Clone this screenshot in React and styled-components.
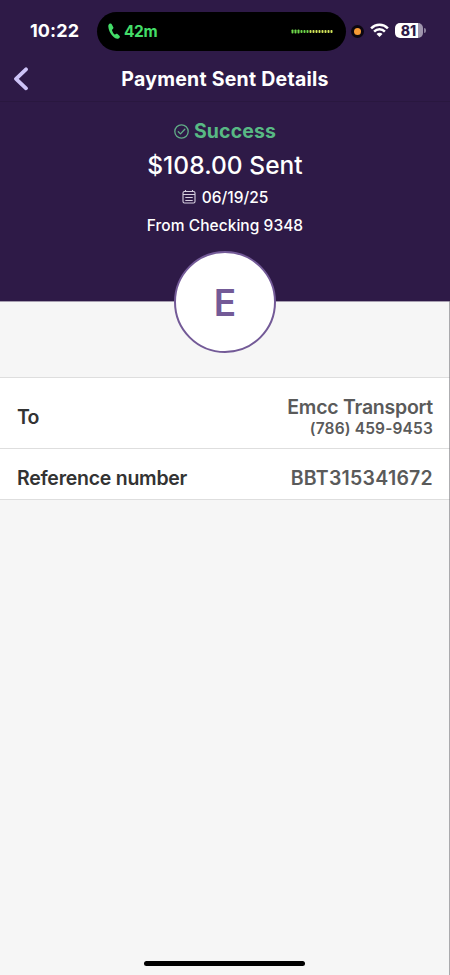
import React from 'react';
import styled, { createGlobalStyle } from 'styled-components';

const GlobalStyle = createGlobalStyle`
  * { box-sizing: border-box; }
  body { margin: 0; background: #f6f6f6; }
`;

const Screen = styled.main`
  display: flex;
  flex-direction: column;
  width: 450px;
  height: 975px;
  background: #f6f6f6;
  font-family: Inter, 'Liberation Sans', sans-serif;
  overflow: hidden;
  position: relative;
  &::after {
    content: '';
    position: absolute;
    right: 0;
    top: 301px;
    bottom: 0;
    width: 1px;
    background: rgba(120, 120, 125, 0.6);
  }
`;

const Header = styled.header`
  display: flex;
  flex-direction: column;
  height: 301px;
  flex: none;
  background: #2e1a47;
  box-shadow: 0 1px 0 #a69eb0;
  color: #fff;
`;

const StatusBar = styled.div`
  display: flex;
  align-items: center;
  height: 50px;
  margin-top: 6px;
`;

const Clock = styled.time`
  width: 67px;
  margin: -1px 0 0 30px;
  font-size: 18px;
  font-weight: 700;
  letter-spacing: 0.1px;
`;

const Island = styled.div`
  display: flex;
  align-items: center;
  justify-content: space-between;
  width: 249px;
  height: 39px;
  padding: 0 13px 0 11px;
  border-radius: 20px;
  background: #000;
`;

const Call = styled.span`
  display: flex;
  align-items: center;
  gap: 4px;
  color: #43dc68;
  font-size: 15.5px;
  font-weight: 700;
  letter-spacing: -0.4px;
`;

const MicDot = styled.span`
  display: flex;
  align-items: center;
  justify-content: center;
  width: 13px;
  height: 13px;
  margin-left: 5px;
  border-radius: 50%;
  background: #0c0710;
  &::before {
    content: '';
    width: 7px;
    height: 7px;
    border-radius: 50%;
    background: #f69a35;
  }
`;

const WifiIcon = styled.svg`
  margin: -2px 0 0 6px;
`;

const Battery = styled.span`
  display: flex;
  align-items: center;
  justify-content: center;
  width: 28px;
  height: 15px;
  margin: -1px 0 0 6px;
  padding-right: 1px;
  border-radius: 5px;
  background: linear-gradient(to right, #fff 0 23px, #9f95ad 23px);
  color: #2e1a47;
  font-size: 14px;
  font-weight: 800;
`;

const BatteryTip = styled.span`
  width: 2px;
  height: 5px;
  margin: -1px 0 0 1px;
  border-radius: 0 2px 2px 0;
  background: #8a7e9a;
`;

const NavBar = styled.nav`
  display: grid;
  grid-template-columns: 50px 1fr 50px;
  align-items: center;
  height: 46px;
  border-bottom: 1px solid #29173f;
`;

const BackButton = styled.button`
  display: flex;
  padding: 0 0 0 13px;
  border: 0;
  background: none;
`;

const Title = styled.h1`
  margin: 0;
  font-size: 19.5px;
  font-weight: 700;
  line-height: 24px;
  text-align: center;
  white-space: nowrap;
  letter-spacing: 0.25px;
`;

const Summary = styled.section`
  display: flex;
  flex-direction: column;
  align-items: center;
  padding-top: 15px;
`;

const SummaryLine = styled.div`
  display: flex;
  align-items: center;
  gap: ${(p) => p.$gap || 5}px;
  height: ${(p) => p.$height}px;
  color: ${(p) => p.$color || '#fff'};
  font-size: ${(p) => p.$size}px;
  font-weight: ${(p) => p.$weight || 550};
  letter-spacing: ${(p) => p.$spacing || 0}px;
  white-space: nowrap;
`;

const AvatarBand = styled.div`
  display: flex;
  justify-content: center;
  height: 76px;
  flex: none;
`;

const Avatar = styled.div`
  display: flex;
  align-items: center;
  justify-content: center;
  width: 102px;
  height: 102px;
  margin-top: -50px;
  border: 2px solid #735a97;
  border-radius: 50%;
  background: #fff;
  color: #735a97;
  font-size: 37px;
  font-weight: 600;
`;

const Details = styled.dl`
  margin: 0;
  border-top: 1px solid #dedede;
  background: #fff;
`;

const Row = styled.div`
  display: flex;
  align-items: center;
  justify-content: space-between;
  height: ${(p) => p.$height}px;
  padding: ${(p) => p.$top}px 17px 0;
  border-bottom: 1px solid #dedede;
`;

const Label = styled.dt`
  color: #333;
  font-size: 19.5px;
  font-weight: 570;
  letter-spacing: ${(p) => p.$spacing}px;
`;

const Value = styled.dd`
  display: flex;
  flex-direction: column;
  align-items: flex-end;
  margin: 0;
  color: #5a5a5a;
  font-size: 19.5px;
  font-weight: 570;
  line-height: 24px;
  letter-spacing: ${(p) => p.$spacing}px;
`;

const Phone = styled.span`
  font-size: 15.5px;
  line-height: 20px;
  letter-spacing: 0.15px;
`;

const HomeIndicator = styled.div`
  width: 161px;
  height: 5px;
  margin: auto auto 9px 144px;
  border-radius: 3px;
  background: #000;
`;

const levels = Array.from({ length: 14 }, (_, i) => i);

export default function App() {
  return (
    <>
      <GlobalStyle />
      <Screen>
        <Header>
          <StatusBar>
            <Clock>10:22</Clock>
            <Island>
              <Call>
                <svg width="12" height="16" viewBox="0 0 12 16" fill="#43dc68">
                  <path d="M2.200.5C.9.7.2 1.900.3 3.600c.4 4.800 3.300 9.500 7 11.700 1.700.9 3.600.5 4.400-.9.300-.6.200-1.200-.3-1.600L9.500 11c-.5-.4-1.100-.4-1.600 0l-.8.5c-.3.200-.6.100-.8-.2C5.300 10.200 4.400 8.700 4 7.200c-.1-.4 0-.6.300-.8l.6-.5c.5-.4.7-.9.500-1.500L3.900 1.500C3.500.7 3 .4 2.200.5Z" />
                </svg>
                42m
              </Call>
              <svg width="42" height="5" viewBox="0 0 42 5">
                {levels.map((i) => (
                  <rect key={i} x={0.5 + i * 3} y={i < 3 ? 0.5 : 0.9} width="2" height={i < 3 ? 4 : 3.2} rx="0.8" fill={i < 6 ? '#6fd94a' : '#d3e65a'} />
                ))}
              </svg>
            </Island>
            <MicDot />
            <WifiIcon width="19" height="14" viewBox="0 0 19 14" fill="none" stroke="#fff" strokeWidth="2.5">
              <path d="M1.100 5.300a12 12 0 0 1 16.800 0M4.100 8.600a7.600 7.600 0 0 1 10.800 0" />
              <path d="M9.500 14 6.500 11a4.200 4.200 0 0 1 6 0Z" fill="#fff" stroke="none" />
            </WifiIcon>
            <Battery>81</Battery>
            <BatteryTip />
          </StatusBar>
          <NavBar>
            <BackButton aria-label="Back">
              <svg width="16" height="24" viewBox="0 0 16 24" fill="none" stroke="#cdc3f7" strokeWidth="3.8" strokeLinecap="round" strokeLinejoin="round">
                <path d="M13 2.300 3 11.800l10 9.500" />
              </svg>
            </BackButton>
            <Title>Payment Sent Details</Title>
          </NavBar>
          <Summary>
            <SummaryLine $height={28} $size={19.5} $weight={700} $color="#58b984" $spacing={0.1}>
              <svg width="15" height="15" viewBox="0 0 15 15" fill="none" stroke="#61ad87" strokeWidth="1.3" strokeLinecap="round" strokeLinejoin="round">
                <circle cx="7.500" cy="7.500" r="6.700" />
                <path d="m4.300 7.700 2.200 2.200 4.300-4.600" />
              </svg>
              Success
            </SummaryLine>
            <SummaryLine $height={39} $size={24.5} $spacing={0.05}>$108.00 Sent</SummaryLine>
            <SummaryLine $height={26} $size={15.5} $gap={6}>
              <svg width="14" height="14" viewBox="0 0 14 14" fill="none" stroke="#d6cfdf" strokeWidth="1.100">
                <rect x="1" y="1.500" width="12" height="11.500" rx="1.500" />
                <path d="M1 4.500h12M3.500 0v2M10.500 0v2M3.300 7.500h7.400M3.300 10.500h7.400" />
              </svg>
              06/19/25
            </SummaryLine>
            <SummaryLine $height={30} $size={15.5} $spacing={0.05}>From Checking 9348</SummaryLine>
          </Summary>
        </Header>
        <AvatarBand>
          <Avatar>E</Avatar>
        </AvatarBand>
        <Details>
          <Row $height={71} $top={7}>
            <Label $spacing={-0.8}>To</Label>
            <Value $spacing={-0.25}>
              Emcc Transport
              <Phone>(786) 459-9453</Phone>
            </Value>
          </Row>
          <Row $height={51} $top={7}>
            <Label $spacing={-0.25}>Reference number</Label>
            <Value $spacing={0.25}>BBT315341672</Value>
          </Row>
        </Details>
        <HomeIndicator />
      </Screen>
    </>
  );
}
